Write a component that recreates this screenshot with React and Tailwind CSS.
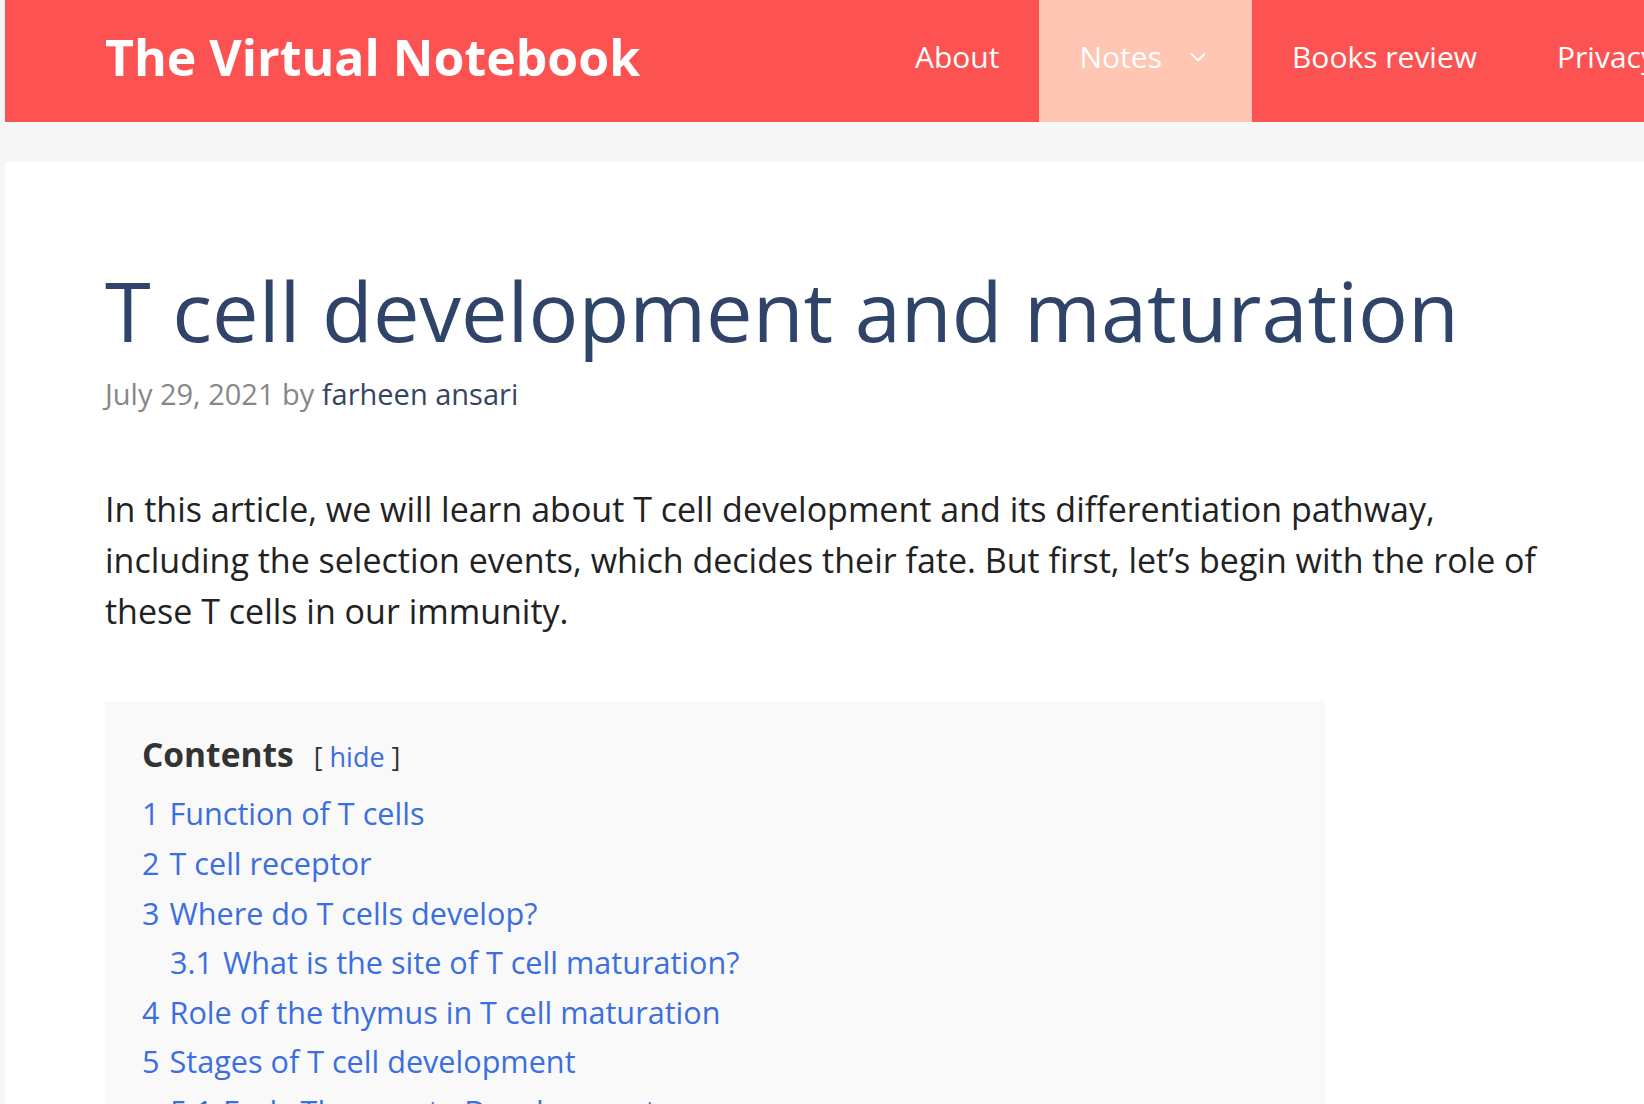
import React from 'react'

const navItems = ['About', 'Notes', 'Books review', 'Privacy Policy', 'Contact']

const toc = [
  { num: '1', label: 'Function of T cells' },
  { num: '2', label: 'T cell receptor' },
  { num: '3', label: 'Where do T cells develop?' },
  { num: '3.1', label: 'What is the site of T cell maturation?', sub: true },
  { num: '4', label: 'Role of the thymus in T cell maturation' },
  { num: '5', label: 'Stages of T cell development' },
  { num: '5.1', label: 'Early Thymocyte Development', sub: true },
  { num: '5.2', label: 'Positive selection', sub: true },
]

function Chevron() {
  return (
    <svg width="16" height="16" viewBox="0 0 16 16" fill="none" className="ml-[28px]">
      <path d="M1 4.5 L8 11.5 L15 4.5" stroke="white" strokeWidth="1.8" />
    </svg>
  )
}

export default function App() {
  return (
    <div className="h-screen w-full overflow-hidden bg-[#f6f6f6] pl-[5px] font-['Open_Sans',sans-serif]">
      {/* header */}
      <header className="flex h-[122px] bg-[#fd5252]">
        <div className="flex w-[870px] shrink-0 items-center pl-[100px] pb-[8px]">
          <span className="text-[50px] font-bold leading-none text-white">The Virtual Notebook</span>
        </div>
        <nav className="flex shrink-0">
          {navItems.map((item) => (
            <a
              key={item}
              className={`flex h-[122px] items-center pb-[9px] pl-[40px] text-[30px] whitespace-nowrap text-white ${
                item === 'Notes' ? 'bg-[#fec6b3] pr-[46px]' : 'pr-[40px]'
              }`}
            >
              <span>{item}</span>
              {item === 'Notes' && <Chevron />}
            </a>
          ))}
        </nav>
      </header>

      {/* article */}
      <main className="mt-[40px] bg-white pl-[100px] pt-[98px] pb-[80px]">
        <h1 className="text-[83px] leading-[1.2] font-normal text-[#2f4468] whitespace-nowrap">
          T cell development and maturation
        </h1>
        <div className="mt-[12px] text-[29px] leading-[1.5] text-[#878787]">
          July 29, 2021 by <a className="text-[#34465f]">farheen ansari</a>
        </div>

        <p className="mt-[69px] w-[1460px] text-[34px] leading-[1.5] text-[#222]">
          In this article, we will learn about T cell development and its differentiation pathway, including the
          selection events, which decides their fate. But first, let’s begin with the role of these T cells in our
          immunity.
        </p>

        <div className="mt-[64px] w-[1221px] bg-[#f9f9f9] pl-[37px] pt-[28px] pb-[30px]">
          <div className="flex items-baseline leading-[1.5]">
            <span className="text-[33.5px] font-bold text-[#333]">Contents</span>
            <span className="ml-[20px] text-[27px] text-[#333]">
              [ <a className="text-[#3b6fdf]">hide</a> ]
            </span>
          </div>
          <ul className="mt-[10px]">
            {toc.map((t) => (
              <li
                key={t.num}
                className={`text-[30.6px] leading-[49.6px] text-[#3b6fdf] ${t.sub ? 'pl-[28px]' : ''}`}
              >
                <span className="pr-[10px]">{t.num}</span>
                {t.label}
              </li>
            ))}
          </ul>
        </div>
      </main>
    </div>
  )
}
